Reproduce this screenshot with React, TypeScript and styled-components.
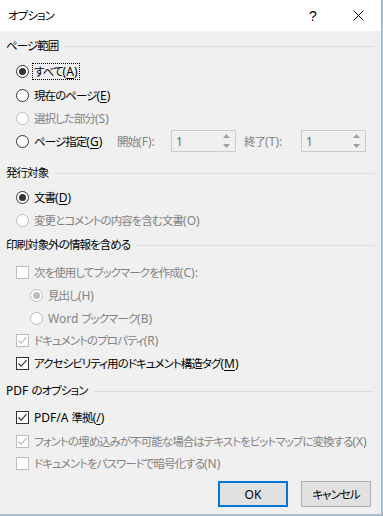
import React from "react";
import styled, { createGlobalStyle } from "styled-components";

const Global = createGlobalStyle`
  html, body { margin: 0; padding: 0; background: #f0f0f0; }
  body {
    font-family: "Noto Sans CJK JP", "Noto Sans", sans-serif;
    font-size: 11.5px;
    letter-spacing: -0.95px;
    font-feature-settings: "palt";
    color: #000;
  }
`;

const Window = styled.div`
  width: 383px;
  height: 516px;
  box-sizing: border-box;
  background: #f0f0f0;
  border-right: 2px solid #a9bccf;
  border-bottom: 2px solid #a9bccf;
  display: flex;
  flex-direction: column;
  overflow: hidden;
`;

const TitleBar = styled.div`
  height: 31px;
  background: #fff;
  display: flex;
  align-items: center;
  padding-left: 8px;
  flex-shrink: 0;
`;

const Title = styled.div`
  flex: 1;
  line-height: 1;
`;

const TitleButton = styled.div<{ $w: number }>`
  width: ${(p) => p.$w}px;
  height: 31px;
  display: flex;
  align-items: center;
  justify-content: center;
  font-family: "Liberation Sans", sans-serif;
  font-size: 14px;
  letter-spacing: 0;
`;

const Section = styled.div<{ $mt: number }>`
  margin-top: ${(p) => p.$mt}px;
  display: flex;
  flex-direction: column;
`;

const Header = styled.div`
  height: 18px;
  display: flex;
  align-items: center;
  padding-left: 6px;
  padding-right: 7px;
  line-height: 1;
  white-space: pre;
`;

const HeaderLine = styled.div`
  flex: 1;
  height: 1px;
  background: #dcdcdc;
  margin-left: 6px;
`;

const Rows = styled.div<{ $pt: number }>`
  padding-top: ${(p) => p.$pt}px;
  display: flex;
  flex-direction: column;
`;

const Row = styled.div<{ $h?: number; $indent?: number }>`
  height: ${(p) => p.$h ?? 23}px;
  display: flex;
  align-items: center;
  padding-left: ${(p) => 16 + (p.$indent ?? 0)}px;
`;

const Label = styled.span<{ $disabled?: boolean; $focus?: boolean; $w?: number }>`
  color: ${(p) => (p.$disabled ? "#838383" : "#000")};
  margin-left: 3px;
  line-height: 14px;
  padding: 0 1px;
  border: 1px ${(p) => (p.$focus ? "dotted #000" : "solid transparent")};
  white-space: pre;
  ${(p) => (p.$w ? `width: ${p.$w}px;` : "")}
`;

const Latin = styled.span`
  font-family: "Noto Sans", "Open Sans", sans-serif;
  font-size: 12px;
  letter-spacing: 0;
`;

const Acc = styled.span`
  text-decoration: underline;
  text-underline-offset: 2px;
`;

const RadioCircle = styled.span<{ $disabled?: boolean; $checked?: boolean }>`
  width: 13px;
  height: 13px;
  box-sizing: border-box;
  border-radius: 50%;
  border: 1px solid ${(p) => (p.$disabled ? "#bcbcbc" : "#333")};
  background: #fff;
  display: flex;
  align-items: center;
  justify-content: center;
  flex-shrink: 0;
  &::after {
    content: "";
    display: ${(p) => (p.$checked ? "block" : "none")};
    width: 7px;
    height: 7px;
    border-radius: 50%;
    background: ${(p) => (p.$disabled ? "#bcbcbc" : "#333")};
  }
`;

const CheckBox = styled.span<{ $disabled?: boolean }>`
  width: 13px;
  height: 13px;
  box-sizing: border-box;
  border: 1px solid ${(p) => (p.$disabled ? "#bcbcbc" : "#333")};
  background: #fff;
  display: flex;
  align-items: center;
  justify-content: center;
  flex-shrink: 0;
`;

const FieldLabel = styled.span<{ $w: number; $ml?: number }>`
  width: ${(p) => p.$w}px;
  margin-left: ${(p) => p.$ml ?? 0}px;
  color: #838383;
  white-space: pre;
  line-height: 14px;
`;

const Spin = styled.div`
  width: 65px;
  height: 22px;
  box-sizing: border-box;
  border: 1px solid #cccccc;
  background: #f0f0f0;
  display: flex;
`;

const SpinText = styled.div`
  flex: 1;
  display: flex;
  align-items: center;
  padding-left: 4px;
  color: #6d6d6d;
  font-family: "Noto Sans", sans-serif;
  font-size: 12px;
  letter-spacing: 0;
`;

const SpinButtons = styled.div`
  width: 17px;
  display: flex;
  flex-direction: column;
`;

const SpinBtn = styled.div`
  flex: 1;
  display: flex;
  align-items: center;
  justify-content: center;
`;

const Footer = styled.div`
  margin-top: 8px;
  display: flex;
  justify-content: flex-end;
  gap: 13px;
  padding-right: 10px;
`;

const Button = styled.button<{ $default?: boolean }>`
  width: 70px;
  height: 26px;
  box-sizing: border-box;
  background: #e1e1e1;
  border: ${(p) => (p.$default ? "2px solid #0078d7" : "1px solid #adadad")};
  font-family: inherit;
  font-size: 11.5px;
  letter-spacing: -0.95px;
  font-feature-settings: "palt";
  color: #000;
  padding: 0;
  margin: 0;
`;

/* Renders a label string: ASCII runs use a Latin face with normal spacing,
   and the character after "&" is underlined as the access key. */
const Txt = ({ t }: { t: string }) => {
  const parts: React.ReactNode[] = [];
  const re = /([\x20-\x7e]+)|([^\x20-\x7e]+)/g;
  let m: RegExpExecArray | null;
  let k = 0;
  while ((m = re.exec(t))) {
    const seg = m[0];
    const isLatin = !!m[1];
    const amp = seg.indexOf("&");
    let content: React.ReactNode = seg;
    if (amp >= 0) {
      content = (
        <>
          {seg.slice(0, amp)}
          <Acc>{seg.charAt(amp + 1)}</Acc>
          {seg.slice(amp + 2)}
        </>
      );
    }
    parts.push(isLatin ? <Latin key={k++}>{content}</Latin> : <React.Fragment key={k++}>{content}</React.Fragment>);
  }
  return <>{parts}</>;
};

const Check = ({ disabled }: { disabled?: boolean }) => (
  <svg width="11" height="11" viewBox="0 0 11 11">
    <path
      d="M1.5 5.5 L4.2 8.2 L9.5 2.2"
      fill="none"
      stroke={disabled ? "#bcbcbc" : "#333"}
      strokeWidth="1.2"
    />
  </svg>
);

const Radio = ({
  checked,
  disabled,
  t,
  focus,
  h,
  indent,
}: {
  checked?: boolean;
  disabled?: boolean;
  t: string;
  focus?: boolean;
  h?: number;
  indent?: number;
}) => (
  <Row $h={h} $indent={indent}>
    <RadioCircle $checked={checked} $disabled={disabled} />
    <Label $disabled={disabled} $focus={focus}>
      <Txt t={t} />
    </Label>
  </Row>
);

const CheckRow = ({
  checked,
  disabled,
  t,
  h,
}: {
  checked?: boolean;
  disabled?: boolean;
  t: string;
  h?: number;
}) => (
  <Row $h={h}>
    <CheckBox $disabled={disabled}>{checked && <Check disabled={disabled} />}</CheckBox>
    <Label $disabled={disabled}>
      <Txt t={t} />
    </Label>
  </Row>
);

const SpinBox = () => (
  <Spin>
    <SpinText>1</SpinText>
    <SpinButtons>
      <SpinBtn>
        <svg width="7" height="4" viewBox="0 0 7 4">
          <path d="M0 4 L3.5 0 L7 4 Z" fill="#a0a0a0" />
        </svg>
      </SpinBtn>
      <SpinBtn>
        <svg width="7" height="4" viewBox="0 0 7 4">
          <path d="M0 0 L3.5 4 L7 0 Z" fill="#a0a0a0" />
        </svg>
      </SpinBtn>
    </SpinButtons>
  </Spin>
);

export default function App() {
  return (
    <>
      <Global />
      <Window>
        <TitleBar>
          <Title>オプション</Title>
          <TitleButton $w={46}>?</TitleButton>
          <TitleButton $w={45}>
            <svg width="11" height="11" viewBox="0 0 11 11">
              <path d="M0.5 0.5 L10.5 10.5 M10.5 0.5 L0.5 10.5" stroke="#000" strokeWidth="1" />
            </svg>
          </TitleButton>
        </TitleBar>

        <Section $mt={6}>
          <Header>
            ページ範囲
            <HeaderLine />
          </Header>
          <Rows $pt={4}>
            <Radio checked focus h={24} t="すべて(&A)" />
            <Radio h={24} t="現在のページ(&E)" />
            <Radio disabled h={22} t="選択した部分(S)" />
            <Row $h={24}>
              <RadioCircle />
              <Label $w={81}>
                <Txt t="ページ指定(&G)" />
              </Label>
              <FieldLabel $w={54}>
                <Txt t="開始(F):" />
              </FieldLabel>
              <SpinBox />
              <FieldLabel $w={57} $ml={8}>
                <Txt t="終了(T):" />
              </FieldLabel>
              <SpinBox />
            </Row>
          </Rows>
        </Section>

        <Section $mt={11}>
          <Header>
            発行対象
            <HeaderLine />
          </Header>
          <Rows $pt={3}>
            <Radio checked h={24} t="文書(&D)" />
            <Radio disabled h={22} t="変更とコメントの内容を含む文書(O)" />
          </Rows>
        </Section>

        <Section $mt={5}>
          <Header>
            印刷対象外の情報を含める
            <HeaderLine />
          </Header>
          <Rows $pt={6}>
            <CheckRow disabled h={24} t="次を使用してブックマークを作成(C):" />
            <Radio checked disabled indent={14} h={22} t="見出し(H)" />
            <Radio disabled indent={14} h={24} t="Word ブックマーク(B)" />
            <CheckRow checked disabled h={21} t="ドキュメントのプロパティ(R)" />
            <CheckRow checked h={24} t="アクセシビリティ用のドキュメント構造タグ(&M)" />
          </Rows>
        </Section>

        <Section $mt={7}>
          <Header>
            <Txt t="PDF のオプション" />
            <HeaderLine />
          </Header>
          <Rows $pt={5}>
            <CheckRow checked h={24} t="PDF/A 準拠(&/)" />
            <CheckRow
              checked
              disabled
              h={24}
              t="フォントの埋め込みが不可能な場合はテキストをビットマップに変換する(X)"
            />
            <CheckRow disabled h={20} t="ドキュメントをパスワードで暗号化する(N)" />
          </Rows>
        </Section>

        <Footer>
          <Button $default>
            <Latin>OK</Latin>
          </Button>
          <Button>キャンセル</Button>
        </Footer>
      </Window>
    </>
  );
}
